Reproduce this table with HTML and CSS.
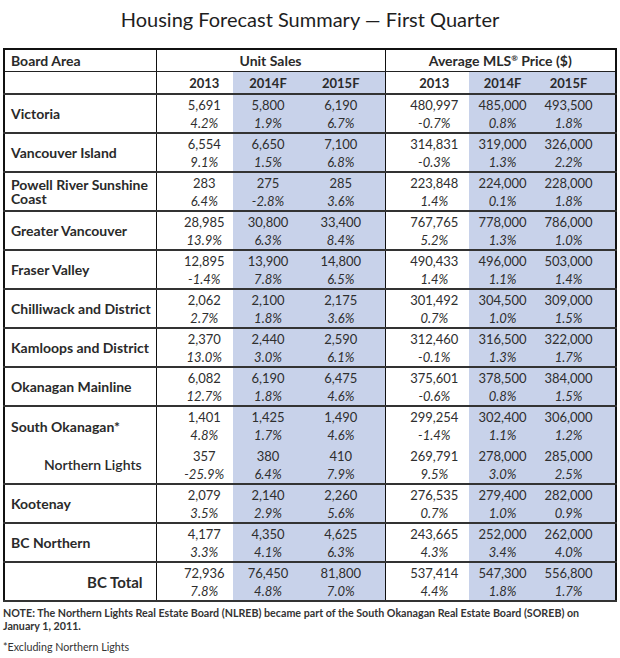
FILE: index.html
```html
<!DOCTYPE html>
<html lang="en">
<head>
<meta charset="utf-8">
<title>Housing Forecast Summary</title>
<link rel="stylesheet" href="styles.css">
</head>
<body>
<h1 class="title">Housing Forecast Summary — First Quarter</h1>
<table class="forecast">
  <colgroup>
    <col class="c-area"><col class="c-u13"><col class="c-u14"><col class="c-u15"><col class="c-m13"><col class="c-m14"><col class="c-m15">
  </colgroup>
  <thead>
    <tr class="h1">
      <th class="area">Board Area</th>
      <th colspan="3" class="grp">Unit Sales</th>
      <th colspan="3" class="grp">Average MLS<sup>®</sup> Price ($)</th>
    </tr>
    <tr class="h2">
      <th class="area"></th>
      <th class="u13 div">2013</th><th class="u14 sh">2014F</th><th class="u15 sh">2015F</th>
      <th class="m13 div">2013</th><th class="m14 sh">2014F</th><th class="m15 sh">2015F</th>
    </tr>
  </thead>
  <tbody>
    <tr class="row">
      <td class="area">Victoria</td>
      <td class="u13 div"><span class="v">5,691</span><span class="p">4.2%</span></td>
      <td class="u14 sh"><span class="v">5,800</span><span class="p">1.9%</span></td>
      <td class="u15 sh"><span class="v">6,190</span><span class="p">6.7%</span></td>
      <td class="m13 div"><span class="v">480,997</span><span class="p">-0.7%</span></td>
      <td class="m14 sh"><span class="v">485,000</span><span class="p">0.8%</span></td>
      <td class="m15 sh"><span class="v">493,500</span><span class="p">1.8%</span></td>
    </tr>
    <tr class="row">
      <td class="area">Vancouver Island</td>
      <td class="u13 div"><span class="v">6,554</span><span class="p">9.1%</span></td>
      <td class="u14 sh"><span class="v">6,650</span><span class="p">1.5%</span></td>
      <td class="u15 sh"><span class="v">7,100</span><span class="p">6.8%</span></td>
      <td class="m13 div"><span class="v">314,831</span><span class="p">-0.3%</span></td>
      <td class="m14 sh"><span class="v">319,000</span><span class="p">1.3%</span></td>
      <td class="m15 sh"><span class="v">326,000</span><span class="p">2.2%</span></td>
    </tr>
    <tr class="row">
      <td class="area two">Powell River Sunshine Coast</td>
      <td class="u13 div"><span class="v">283</span><span class="p">6.4%</span></td>
      <td class="u14 sh"><span class="v">275</span><span class="p">-2.8%</span></td>
      <td class="u15 sh"><span class="v">285</span><span class="p">3.6%</span></td>
      <td class="m13 div"><span class="v">223,848</span><span class="p">1.4%</span></td>
      <td class="m14 sh"><span class="v">224,000</span><span class="p">0.1%</span></td>
      <td class="m15 sh"><span class="v">228,000</span><span class="p">1.8%</span></td>
    </tr>
    <tr class="row">
      <td class="area">Greater Vancouver</td>
      <td class="u13 div"><span class="v">28,985</span><span class="p">13.9%</span></td>
      <td class="u14 sh"><span class="v">30,800</span><span class="p">6.3%</span></td>
      <td class="u15 sh"><span class="v">33,400</span><span class="p">8.4%</span></td>
      <td class="m13 div"><span class="v">767,765</span><span class="p">5.2%</span></td>
      <td class="m14 sh"><span class="v">778,000</span><span class="p">1.3%</span></td>
      <td class="m15 sh"><span class="v">786,000</span><span class="p">1.0%</span></td>
    </tr>
    <tr class="row">
      <td class="area">Fraser Valley</td>
      <td class="u13 div"><span class="v">12,895</span><span class="p">-1.4%</span></td>
      <td class="u14 sh"><span class="v">13,900</span><span class="p">7.8%</span></td>
      <td class="u15 sh"><span class="v">14,800</span><span class="p">6.5%</span></td>
      <td class="m13 div"><span class="v">490,433</span><span class="p">1.4%</span></td>
      <td class="m14 sh"><span class="v">496,000</span><span class="p">1.1%</span></td>
      <td class="m15 sh"><span class="v">503,000</span><span class="p">1.4%</span></td>
    </tr>
    <tr class="row">
      <td class="area">Chilliwack and District</td>
      <td class="u13 div"><span class="v">2,062</span><span class="p">2.7%</span></td>
      <td class="u14 sh"><span class="v">2,100</span><span class="p">1.8%</span></td>
      <td class="u15 sh"><span class="v">2,175</span><span class="p">3.6%</span></td>
      <td class="m13 div"><span class="v">301,492</span><span class="p">0.7%</span></td>
      <td class="m14 sh"><span class="v">304,500</span><span class="p">1.0%</span></td>
      <td class="m15 sh"><span class="v">309,000</span><span class="p">1.5%</span></td>
    </tr>
    <tr class="row">
      <td class="area">Kamloops and District</td>
      <td class="u13 div"><span class="v">2,370</span><span class="p">13.0%</span></td>
      <td class="u14 sh"><span class="v">2,440</span><span class="p">3.0%</span></td>
      <td class="u15 sh"><span class="v">2,590</span><span class="p">6.1%</span></td>
      <td class="m13 div"><span class="v">312,460</span><span class="p">-0.1%</span></td>
      <td class="m14 sh"><span class="v">316,500</span><span class="p">1.3%</span></td>
      <td class="m15 sh"><span class="v">322,000</span><span class="p">1.7%</span></td>
    </tr>
    <tr class="row">
      <td class="area">Okanagan Mainline</td>
      <td class="u13 div"><span class="v">6,082</span><span class="p">12.7%</span></td>
      <td class="u14 sh"><span class="v">6,190</span><span class="p">1.8%</span></td>
      <td class="u15 sh"><span class="v">6,475</span><span class="p">4.6%</span></td>
      <td class="m13 div"><span class="v">375,601</span><span class="p">-0.6%</span></td>
      <td class="m14 sh"><span class="v">378,500</span><span class="p">0.8%</span></td>
      <td class="m15 sh"><span class="v">384,000</span><span class="p">1.5%</span></td>
    </tr>
    <tr class="row lead">
      <td class="area">South Okanagan*</td>
      <td class="u13 div"><span class="v">1,401</span><span class="p">4.8%</span></td>
      <td class="u14 sh"><span class="v">1,425</span><span class="p">1.7%</span></td>
      <td class="u15 sh"><span class="v">1,490</span><span class="p">4.6%</span></td>
      <td class="m13 div"><span class="v">299,254</span><span class="p">-1.4%</span></td>
      <td class="m14 sh"><span class="v">302,400</span><span class="p">1.1%</span></td>
      <td class="m15 sh"><span class="v">306,000</span><span class="p">1.2%</span></td>
    </tr>
    <tr class="row sub">
      <td class="area indent">Northern Lights</td>
      <td class="u13 div"><span class="v">357</span><span class="p">-25.9%</span></td>
      <td class="u14 sh"><span class="v">380</span><span class="p">6.4%</span></td>
      <td class="u15 sh"><span class="v">410</span><span class="p">7.9%</span></td>
      <td class="m13 div"><span class="v">269,791</span><span class="p">9.5%</span></td>
      <td class="m14 sh"><span class="v">278,000</span><span class="p">3.0%</span></td>
      <td class="m15 sh"><span class="v">285,000</span><span class="p">2.5%</span></td>
    </tr>
    <tr class="row">
      <td class="area">Kootenay</td>
      <td class="u13 div"><span class="v">2,079</span><span class="p">3.5%</span></td>
      <td class="u14 sh"><span class="v">2,140</span><span class="p">2.9%</span></td>
      <td class="u15 sh"><span class="v">2,260</span><span class="p">5.6%</span></td>
      <td class="m13 div"><span class="v">276,535</span><span class="p">0.7%</span></td>
      <td class="m14 sh"><span class="v">279,400</span><span class="p">1.0%</span></td>
      <td class="m15 sh"><span class="v">282,000</span><span class="p">0.9%</span></td>
    </tr>
    <tr class="row">
      <td class="area">BC Northern</td>
      <td class="u13 div"><span class="v">4,177</span><span class="p">3.3%</span></td>
      <td class="u14 sh"><span class="v">4,350</span><span class="p">4.1%</span></td>
      <td class="u15 sh"><span class="v">4,625</span><span class="p">6.3%</span></td>
      <td class="m13 div"><span class="v">243,665</span><span class="p">4.3%</span></td>
      <td class="m14 sh"><span class="v">252,000</span><span class="p">3.4%</span></td>
      <td class="m15 sh"><span class="v">262,000</span><span class="p">4.0%</span></td>
    </tr>
    <tr class="row total">
      <td class="area total-label">BC Total</td>
      <td class="u13 div"><span class="v">72,936</span><span class="p">7.8%</span></td>
      <td class="u14 sh"><span class="v">76,450</span><span class="p">4.8%</span></td>
      <td class="u15 sh"><span class="v">81,800</span><span class="p">7.0%</span></td>
      <td class="m13 div"><span class="v">537,414</span><span class="p">4.4%</span></td>
      <td class="m14 sh"><span class="v">547,300</span><span class="p">1.8%</span></td>
      <td class="m15 sh"><span class="v">556,800</span><span class="p">1.7%</span></td>
    </tr>
  </tbody>
</table>
<p class="note">NOTE: The Northern Lights Real Estate Board (NLREB) became part of the South Okanagan Real Estate Board (SOREB) on January 1, 2011.</p>
<p class="foot">*Excluding Northern Lights</p>
</body>
</html>
```
FILE: styles.css
```css
html, body {
  margin: 0;
  padding: 0;
  background: #ffffff;
}
body {
  padding: 0 3px 0 3px;
  font-family: Lato, "Liberation Sans", sans-serif;
  color: #2e2e2e;
}
.title {
  margin: 0;
  height: 48px;
  line-height: 38px;
  font-size: 20px;
  font-weight: 400;
  text-align: center;
  color: #1e1e1e;
}
.forecast {
  width: 614px;
  border-collapse: collapse;
  table-layout: fixed;
  border: 2px solid #111;
}
.c-area { width: 152px; }
.c-u13 { width: 77px; }
.c-u14 { width: 70px; }
.c-u15 { width: 82px; }
.c-m13 { width: 84px; }
.c-m14 { width: 67px; }
.c-m15 { width: 80px; }

.forecast th, .forecast td {
  padding: 0;
  text-align: center;
}
.forecast .area {
  text-align: left;
  padding-left: 6px;
  font-size: 14px;
  font-weight: 700;
  line-height: 14px;
  color: #2a2a2a;
}
.h1 th {
  height: 21px;
  border-bottom: 1px solid #222;
}
.h1 .grp {
  border-left: 1px solid #111;
  font-size: 14px;
  font-weight: 700;
  color: #2a2a2a;
}
.h1 sup {
  font-size: 8px;
  vertical-align: 5px;
  line-height: 0;
}
.h2 th {
  height: 21px;
  border-bottom: 2px solid #333;
  font-size: 13px;
  font-weight: 700;
  color: #2a2a2a;
}
.div { border-left: 1px solid #111; }
.sh { background: #c8d2ea; }

.u13 { padding-left: 19px !important; }
.u15 { padding-right: 6px !important; }
.m13 { padding-left: 14px !important; }
.m15 { padding-right: 14px !important; }

.row td {
  height: 35px;
  border-bottom: 2px solid #333;
  vertical-align: top;
  padding-top: 2px;
}
.row td.area {
  vertical-align: middle;
  padding-top: 0;
}
.row.lead td {
  border-bottom: 0;
  height: 37px;
}
.row .v, .row .p {
  display: block;
  line-height: 17.5px;
  font-size: 13px;
  color: #2e2e2e;
}
.row .p { font-style: italic; }
.row td.two { padding-right: 4px; }
.row td.indent { padding-left: 39px; font-weight: 600; }
.row td.total-label { padding-left: 82px; font-size: 15px; }

.note {
  width: 586px;
  margin: 4px 0 0 0;
  font-size: 10.7px;
  font-weight: 700;
  line-height: 13px;
  color: #333;
}
.foot {
  margin: 8px 0 0 0;
  font-size: 10.7px;
  line-height: 13px;
  color: #333;
}
```
